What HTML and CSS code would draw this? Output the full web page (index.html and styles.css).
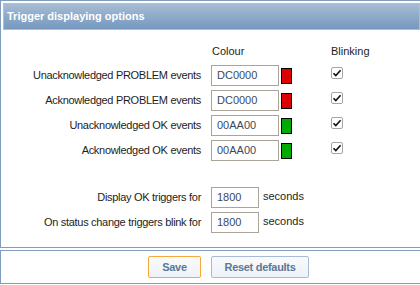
FILE: index.html
```html
<!DOCTYPE html>
<html>
<head>
<meta charset="utf-8">
<link rel="stylesheet" href="styles.css">
</head>
<body>
<div class="panel">
  <div class="header">Trigger displaying options</div>
  <div class="form">
    <div class="label"></div>
    <div class="colhead">Colour</div>
    <div class="colhead">Blinking</div>

    <div class="label">Unacknowledged PROBLEM events</div>
    <div class="cell"><span class="input wide">DC0000</span><span class="swatch red"></span></div>
    <div class="cell"><span class="check"><svg width="10" height="10" viewBox="0 0 10 10"><path d="M1.5 5.2 L3.8 7.6 L8.6 2.2" fill="none" stroke="#111" stroke-width="1.6"/></svg></span></div>

    <div class="label">Acknowledged PROBLEM events</div>
    <div class="cell"><span class="input wide">DC0000</span><span class="swatch red"></span></div>
    <div class="cell"><span class="check"><svg width="10" height="10" viewBox="0 0 10 10"><path d="M1.5 5.2 L3.8 7.6 L8.6 2.2" fill="none" stroke="#111" stroke-width="1.6"/></svg></span></div>

    <div class="label">Unacknowledged OK events</div>
    <div class="cell"><span class="input wide">00AA00</span><span class="swatch green"></span></div>
    <div class="cell"><span class="check"><svg width="10" height="10" viewBox="0 0 10 10"><path d="M1.5 5.2 L3.8 7.6 L8.6 2.2" fill="none" stroke="#111" stroke-width="1.6"/></svg></span></div>

    <div class="label">Acknowledged OK events</div>
    <div class="cell"><span class="input wide">00AA00</span><span class="swatch green"></span></div>
    <div class="cell"><span class="check"><svg width="10" height="10" viewBox="0 0 10 10"><path d="M1.5 5.2 L3.8 7.6 L8.6 2.2" fill="none" stroke="#111" stroke-width="1.6"/></svg></span></div>

    <div class="label spaced">Display OK triggers for</div>
    <div class="cell spaced span2"><span class="input short">1800</span><span class="unit">seconds</span></div>

    <div class="label">On status change triggers blink for</div>
    <div class="cell span2"><span class="input short">1800</span><span class="unit">seconds</span></div>
  </div>
</div>
<div class="footer">
  <div class="btncell left"><span class="btn save">Save</span></div>
  <div class="btncell"><span class="btn reset">Reset defaults</span></div>
</div>
</body>
</html>
```
FILE: styles.css
```css
html, body {
  margin: 0;
  padding: 0;
  overflow: hidden;
  background: #ffffff;
}
body {
  width: 430px;
  font-family: "Liberation Sans", Arial, sans-serif;
  font-size: 11px;
  color: #1d1d1d;
}
.panel {
  border: 1px solid #7f9dbf;
  padding: 2px;
  box-sizing: content-box;
  width: 417px;
  height: 242px;
}
.header {
  height: 25px;
  border: 1px solid #aebfd3;
  background: linear-gradient(#a6bcd4, #7598bf);
  color: #ffffff;
  font-weight: bold;
  font-size: 11px;
  line-height: 25px;
  padding-left: 3px;
}
.form {
  display: grid;
  grid-template-columns: 208px 120px 80px;
  padding-top: 13px;
}
.colhead {
  height: 22px;
  line-height: 16px;
}
.form > .colhead:nth-child(2) { padding-left: 1px; }
.label {
  text-align: right;
  padding-right: 10px;
  height: 25px;
  line-height: 21px;
  white-space: nowrap;
  letter-spacing: -0.3px;
}
.form > .label:first-child { height: 22px; }
.cell {
  display: flex;
  align-items: flex-start;
  height: 25px;
}
.span2 { grid-column: span 2; }
.spaced { margin-top: 22px; }
.input {
  display: inline-block;
  box-sizing: border-box;
  height: 21px;
  border: 1px solid #aaa598;
  padding-left: 5px;
  line-height: 19px;
  color: #3a4a5e;
  background: #fff;
}
.wide { width: 68px; }
.short { width: 48px; }
.swatch {
  display: inline-block;
  width: 9px;
  height: 14px;
  border: 1px solid #000;
  margin-left: 2px;
  margin-top: 3px;
}
.red { background: #dc0000; }
.green { background: #00aa00; }
.unit {
  margin-left: 4px;
  line-height: 19px;
}
.check {
  display: flex;
  align-items: center;
  justify-content: center;
  box-sizing: border-box;
  width: 12px;
  height: 12px;
  border: 1px solid #a5a5a5;
  border-radius: 2px;
  background: #fff;
  margin-top: 2px;
}
.footer {
  margin-top: 2px;
  border: 1px solid #7f9dbf;
  width: 423px;
  height: 34px;
  box-sizing: border-box;
  display: grid;
  grid-template-columns: 210px auto;
  align-items: start;
  padding-top: 5px;
}
.btncell { display: flex; }
.btncell.left { justify-content: flex-end; padding-right: 10px; }
.btn {
  display: inline-block;
  box-sizing: border-box;
  height: 22px;
  line-height: 20px;
  border: 1px solid #a9bbd3;
  border-radius: 2px;
  background: linear-gradient(#f9fafc, #eef2f7);
  color: #5d7895;
  font-weight: bold;
  font-size: 11px;
  letter-spacing: -0.3px;
  text-align: center;
}
.btn.save {
  border-color: #f6a93a;
  width: 53px;
}
.btn.reset { width: 98px; }
```
